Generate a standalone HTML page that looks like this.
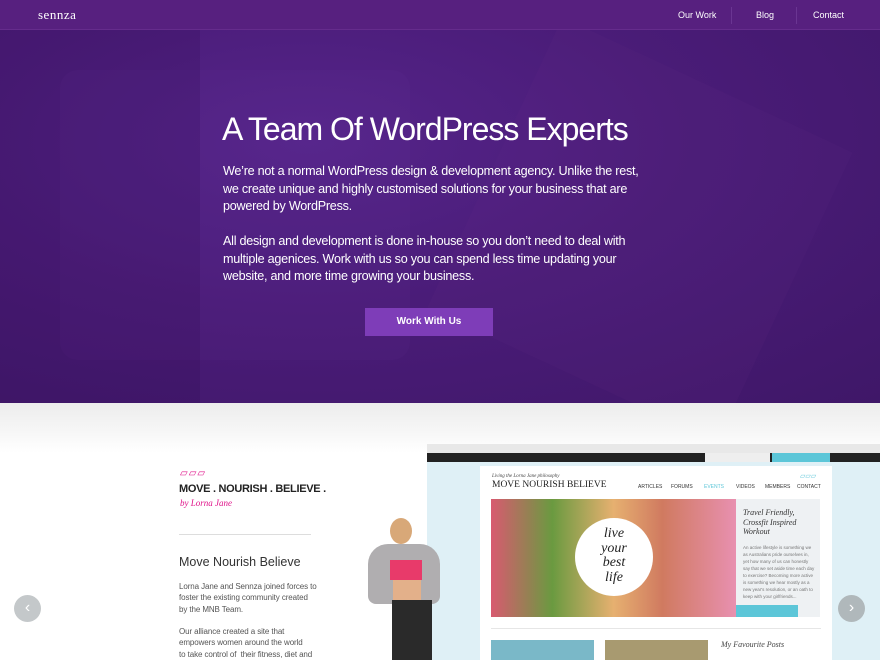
<!DOCTYPE html>
<html><head><style>
*{margin:0;padding:0;box-sizing:border-box}
html,body{width:880px;height:660px;overflow:hidden}
body{font-family:"Liberation Sans",sans-serif;background:#fff;position:relative}
.hero{position:absolute;left:0;top:0;width:880px;height:403px;background:radial-gradient(ellipse at 35% 35%,#55248a 0%,#4a1c78 45%,#3f1768 100%)}
.nav{position:absolute;left:0;top:0;width:880px;height:30px;background:#57207f;border-bottom:1px solid #652c8c}
.logo{position:absolute;left:38px;top:7px;color:#fff;font-family:"Liberation Serif",serif;font-size:13px;letter-spacing:0.5px}
.nav a{position:absolute;top:10px;color:#fff;font-size:9px;text-decoration:none}
.sep{position:absolute;top:7px;width:1px;height:17px;background:#6a3592}
h1{position:absolute;left:222px;top:111px;color:#fff;font-weight:normal;font-size:32px;letter-spacing:-1px;white-space:nowrap}
.p{position:absolute;left:223px;color:#fff;font-size:12.6px;line-height:17.5px;width:440px;letter-spacing:-0.25px}
.btn{position:absolute;left:365px;top:308px;width:128px;height:28px;background:#7e3db8;color:#fff;font-size:10px;font-weight:bold;text-align:center;line-height:28px}
.shade{position:absolute;left:0;top:403px;width:880px;height:50px;background:linear-gradient(#ececec,#fff)}
.mn{position:absolute;top:484px;font-size:5px;color:#333}
</style></head><body>
<div class="hero">
<div style="position:absolute;left:60px;top:70px;width:350px;height:290px;border-radius:18px;background:rgba(120,70,170,.08)"></div>
<div style="position:absolute;left:480px;top:70px;width:320px;height:320px;background:rgba(110,50,140,.1);transform:rotate(25deg)"></div>
<div style="position:absolute;left:0;top:30px;width:200px;height:373px;background:rgba(40,10,70,.15)"></div>
</div>
<div class="nav">
<div class="logo">sennza</div>
<a style="left:678px">Our Work</a><div class="sep" style="left:731px"></div>
<a style="left:756px">Blog</a><div class="sep" style="left:796px"></div>
<a style="left:813px">Contact</a>
</div>
<h1>A Team Of WordPress Experts</h1>
<div class="p" style="top:163px">We’re not a normal WordPress design &amp; development agency. Unlike the rest,<br>we create unique and highly customised solutions for your business that are<br>powered by WordPress.</div>
<div class="p" style="top:233px">All design and development is done in-house so you don’t need to deal with<br>multiple agenices. Work with us so you can spend less time updating your<br>website, and more time growing your business.</div>
<div class="btn">Work With Us</div>
<div class="shade"></div>

<div style="position:absolute;left:180px;top:468px;color:#e0148a;font-size:10px;letter-spacing:1px">▱▱▱</div>
<div style="position:absolute;left:179px;top:483px;font-size:11px;font-weight:bold;color:#222;letter-spacing:-0.3px">MOVE . NOURISH . BELIEVE .</div>
<div style="position:absolute;left:180px;top:498px;color:#e0148a;font-size:9px;font-style:italic;font-family:'Liberation Serif',serif">by Lorna Jane</div>
<div style="position:absolute;left:179px;top:534px;width:132px;height:1px;background:#ddd"></div>
<div style="position:absolute;left:179px;top:555px;font-size:12.5px;color:#333">Move Nourish Believe</div>
<div style="position:absolute;left:179px;top:581px;font-size:8px;line-height:11.3px;color:#555;width:160px;letter-spacing:-0.1px">Lorna Jane and Sennza joined forces to<br>foster the existing community created<br>by the MNB Team.<br><br>Our alliance created a site that<br>empowers women around the world<br>to take control of &nbsp;their fitness, diet and</div>

<!-- mockup -->
<div style="position:absolute;left:427px;top:444px;width:453px;height:216px;background:#dff0f6"></div>
<div style="position:absolute;left:427px;top:444px;width:453px;height:9px;background:#e8e8e8"></div>
<div style="position:absolute;left:427px;top:453px;width:453px;height:9px;background:#222"></div>
<div style="position:absolute;left:705px;top:453px;width:65px;height:9px;background:#eee"></div>
<div style="position:absolute;left:772px;top:453px;width:58px;height:9px;background:#5cc6d8"></div>
<div style="position:absolute;left:480px;top:466px;width:352px;height:194px;background:#fff"></div>
<div style="position:absolute;left:492px;top:474px;font-size:5px;font-style:italic;font-family:'Liberation Serif',serif;color:#444">Living the Lorna Jane philosophy</div>
<div style="position:absolute;left:492px;top:480px;font-size:9.5px;font-family:'Liberation Serif',serif;color:#222">MOVE NOURISH BELIEVE</div>
<div class="mn" style="left:638px">ARTICLES</div><div class="mn" style="left:671px">FORUMS</div><div class="mn" style="left:704px;color:#5cc6d8">EVENTS</div><div class="mn" style="left:736px">VIDEOS</div><div class="mn" style="left:765px">MEMBERS</div><div class="mn" style="left:797px">CONTACT</div>
<div style="position:absolute;left:800px;top:472px;font-size:7px;color:#5cc6d8">▱▱▱</div>
<div style="position:absolute;left:491px;top:499px;width:245px;height:118px;background:linear-gradient(90deg,#d85a70,#6a9a40 25%,#e6b070 50%,#d07a60 70%,#e890b0)"></div>
<div style="position:absolute;left:575px;top:518px;width:78px;height:78px;border-radius:50%;background:#fff;text-align:center;font-family:'Liberation Serif',serif;font-style:italic;font-size:14px;line-height:14.5px;padding-top:9px;color:#222">live<br>your<br>best<br>life</div>
<div style="position:absolute;left:736px;top:499px;width:84px;height:118px;background:#eef1f3"></div>
<div style="position:absolute;left:743px;top:508px;font-family:'Liberation Serif',serif;font-style:italic;font-size:8px;line-height:9.5px;color:#333">Travel Friendly,<br>Crossfit Inspired<br>Workout</div>
<div style="position:absolute;left:743px;top:544px;font-size:4.5px;line-height:7px;color:#777;width:72px">An active lifestyle is something we as Australians pride ourselves in, yet how many of us can honestly say that we set aside time each day to exercise? Becoming more active is something we hear mostly as a new year's resolution, or an oath to keep with your girlfriends...</div>
<div style="position:absolute;left:736px;top:605px;width:62px;height:12px;background:#5cc6d8"></div>
<div style="position:absolute;left:491px;top:628px;width:330px;height:1px;background:#e6e6e6"></div>
<div style="position:absolute;left:491px;top:640px;width:103px;height:20px;background:#7ab8c8"></div>
<div style="position:absolute;left:605px;top:640px;width:103px;height:20px;background:#a89a70"></div>
<div style="position:absolute;left:721px;top:640px;font-family:'Liberation Serif',serif;font-style:italic;font-size:8px;color:#444">My Favourite Posts</div>

<!-- woman -->
<div style="position:absolute;left:390px;top:518px;width:22px;height:26px;border-radius:50%;background:#d8a878"></div>
<div style="position:absolute;left:368px;top:544px;width:72px;height:60px;border-radius:20px 20px 8px 8px;background:#b0aeb0"></div>
<div style="position:absolute;left:390px;top:560px;width:32px;height:20px;background:#e83a6a"></div>
<div style="position:absolute;left:393px;top:580px;width:28px;height:20px;background:#e3b08a"></div>
<div style="position:absolute;left:392px;top:600px;width:40px;height:60px;background:#2a2a2a"></div>

<div style="position:absolute;left:14px;top:595px;width:27px;height:27px;border-radius:50%;background:#c4c8ca;color:#fff;font-size:16px;text-align:center;line-height:26px">‹</div>
<div style="position:absolute;left:838px;top:595px;width:27px;height:27px;border-radius:50%;background:#b0b8bb;color:#fff;font-size:16px;text-align:center;line-height:26px">›</div>
</body></html>
